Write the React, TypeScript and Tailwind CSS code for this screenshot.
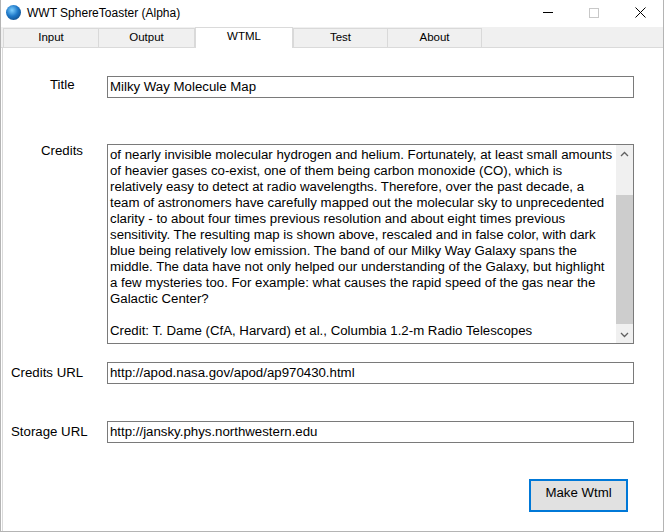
import React from "react";

const creditLines = [
  "of nearly invisible molecular hydrogen and helium. Fortunately, at least small amounts",
  "of heavier gases co-exist, one of them being carbon monoxide (CO), which is",
  "relatively easy to detect at radio wavelengths. Therefore, over the past decade, a",
  "team of astronomers have carefully mapped out the molecular sky to unprecedented",
  "clarity - to about four times previous resolution and about eight times previous",
  "sensitivity. The resulting map is shown above, rescaled and in false color, with dark",
  "blue being relatively low emission. The band of our Milky Way Galaxy spans the",
  "middle. The data have not only helped our understanding of the Galaxy, but highlight",
  "a few mysteries too. For example: what causes the rapid speed of the gas near the",
  "Galactic Center?",
  "",
  "Credit: T. Dame (CfA, Harvard) et al., Columbia 1.2-m Radio Telescopes",
];

function Field({ value }: { value: string }) {
  return (
    <div className="w-[527px] h-[22px] border border-[#7a7a7a] bg-white pl-[2px] flex items-center text-[13.25px] leading-none text-black whitespace-nowrap overflow-hidden">
      {value}
    </div>
  );
}

export default function App() {
  const tabs = ["Input", "Output", "WTML", "Test", "About"];
  const widths = ["w-[96px]", "w-[97px]", "w-[98px]", "w-[95px]", "w-[95px]"];
  return (
    <div
      className="w-[664px] h-[532px] bg-white border-l border-r border-b border-[#b4b4b4] flex flex-col overflow-hidden text-black"
      style={{ fontFamily: '"Liberation Sans", Arial, sans-serif' }}
    >
      {/* Title bar */}
      <div className="h-[27px] flex items-center shrink-0 pb-[2px]">
        <div className="ml-[5px] w-[15px] h-[15px] rounded-full bg-[radial-gradient(circle_at_40%_35%,#7fd0ff_0%,#1e78c8_45%,#0a3a70_100%)]" />
        <div className="ml-[6px] text-[12px]">WWT SphereToaster (Alpha)</div>
        <div className="flex-1" />
        <div className="w-[46px] h-full flex items-center justify-center">
          <div className="w-[10px] h-px bg-black" />
        </div>
        <div className="w-[46px] h-full flex items-center justify-center">
          <div className="w-[10px] h-[10px] border border-[#c8c8c8]" />
        </div>
        <div className="w-[46px] h-full flex items-center justify-center">
          <svg width="11" height="11" viewBox="0 0 11 11">
            <path d="M0.5 0.5 L10.5 10.5 M10.5 0.5 L0.5 10.5" stroke="#000" strokeWidth="1" />
          </svg>
        </div>
      </div>

      {/* Tab strip */}
      <div className="h-[21px] shrink-0 flex items-end bg-[#f0f0f0] pl-[2px] border-b border-[#dadada]">
        {tabs.map((t, i) => {
          const sel = t === "WTML";
          return (
            <div
              key={t}
              className={
                widths[i] +
                " flex items-center justify-center text-[11.5px] border-t border-l border-r " +
                (sel
                  ? "h-[21px] bg-white border-[#dadada] -mb-px pb-[3px]"
                  : "h-[19px] bg-[#f0f0f0] border-[#d9d9d9] " + (i === 0 || i === 3 ? "" : "-ml-px"))
              }
            >
              {t}
            </div>
          );
        })}
        <div className="flex-1 h-[19px] bg-[#f0f0f0]" />
      </div>

      {/* Content */}
      <div className="flex-1 flex flex-col text-[13.25px] border-l border-[#dadada] ml-px mr-[1px]">
        {/* Title */}
        <div className="flex mt-[28px]">
          <div className="w-[104px] pl-[47px] -mt-[1px]">Title</div>
          <Field value="Milky Way Molecule Map" />
        </div>

        {/* Credits */}
        <div className="flex mt-[46px]">
          <div className="w-[104px] pl-[38px] -mt-[3px]">Credits</div>
          <div className="w-[527px] h-[200px] border border-[#7a7a7a] bg-white flex">
            <div className="flex-1 pl-[2px] pt-[2px] text-[13.25px] leading-[16px] whitespace-pre overflow-hidden">
              {creditLines.map((l, i) => (
                <div key={i} className="h-[16px]">
                  {l}
                </div>
              ))}
            </div>
            <div className="w-[17px] bg-[#f0f0f0] flex flex-col">
              <div className="h-[17px] flex items-center justify-center">
                <svg width="9" height="6" viewBox="0 0 9 6">
                  <path d="M1 5 L4.5 1.5 L8 5" stroke="#606060" strokeWidth="1.3" fill="none" />
                </svg>
              </div>
              <div className="h-[33px]" />
              <div className="h-[129px] bg-[#cdcdcd]" />
              <div className="flex-1" />
              <div className="h-[17px] flex items-center justify-center">
                <svg width="9" height="6" viewBox="0 0 9 6">
                  <path d="M1 1 L4.5 4.5 L8 1" stroke="#606060" strokeWidth="1.3" fill="none" />
                </svg>
              </div>
            </div>
          </div>
        </div>

        {/* Credits URL */}
        <div className="flex mt-[18px] items-center">
          <div className="w-[104px] pl-[8px]">Credits URL</div>
          <Field value="http://apod.nasa.gov/apod/ap970430.html" />
        </div>

        {/* Storage URL */}
        <div className="flex mt-[37px] items-center">
          <div className="w-[104px] pl-[8px]">Storage URL</div>
          <Field value="http://jansky.phys.northwestern.edu" />
        </div>

        {/* Button */}
        <div className="flex mt-[36px] pl-[526px]">
          <div className="w-[99px] h-[33px] border-2 border-[#0078d7] bg-[#e1e1e1] flex justify-center pt-[2px] text-[13.25px]">
            Make Wtml
          </div>
        </div>
      </div>
    </div>
  );
}
